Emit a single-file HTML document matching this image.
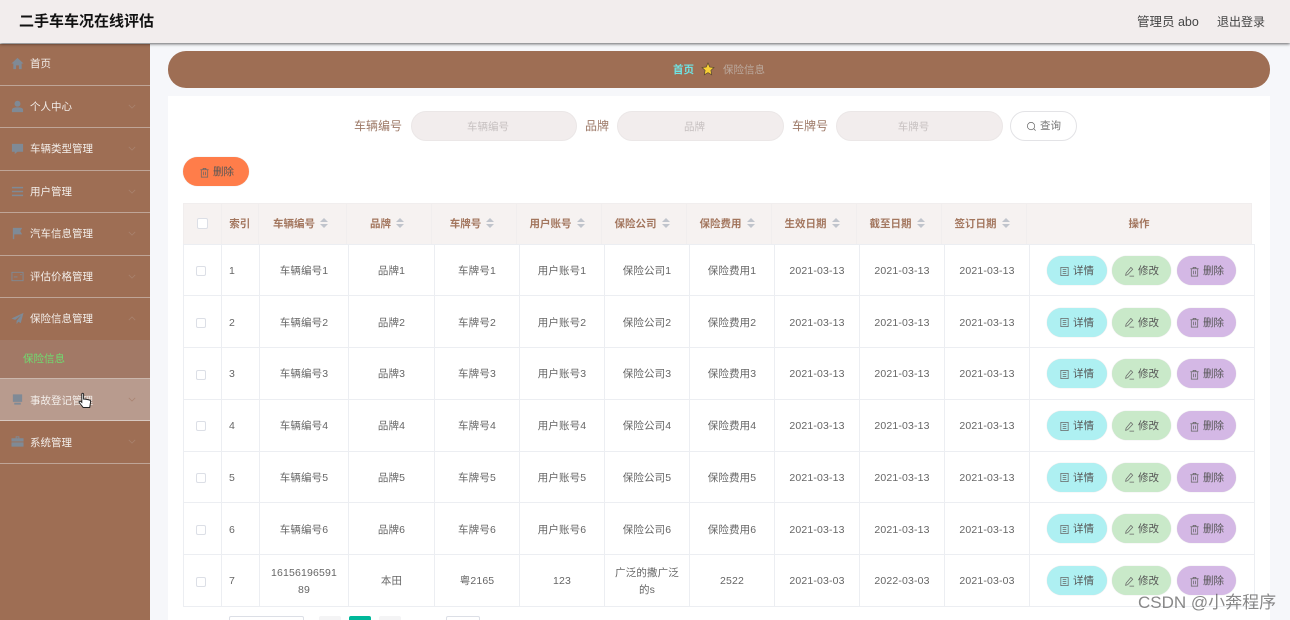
<!DOCTYPE html>
<html lang="zh"><head><meta charset="utf-8"><title>二手车车况在线评估</title>
<style>
*{box-sizing:border-box}
html,body{margin:0;padding:0;width:1290px;height:620px;overflow:hidden;background:#f6f7fa;font-family:"Liberation Sans","Noto Sans CJK SC",sans-serif;color:#666}
#root{position:absolute;left:0;top:0;width:1290px;height:620px;overflow:hidden;filter:blur(.35px)}
.a{position:absolute}
#top{left:0;top:0;width:1290px;height:43px;background:#f2eded;box-shadow:0 1px 3px rgba(0,0,0,.6);z-index:5}
#top b{position:absolute;left:19px;top:11px;font-size:15px;line-height:22px;color:#111}
#top span{position:absolute;top:13px;font-size:12px;line-height:18px;color:#444}
#side{left:0;top:44px;width:150px;height:576px;background:#9e6e54}
.m{position:absolute;left:0;width:150px;height:42.5px;border-bottom:1.5px solid #bfa597;color:#f3eeea;font-size:10.5px;line-height:43.5px;padding-left:30px}
.m svg.i{position:absolute;left:11px;top:14px;width:13px;height:13px;fill:#7f8a96}
.m svg.c{position:absolute;left:128px;top:18px;width:8px;height:5px;fill:none;stroke:#a98370;stroke-width:1}
#sub{position:absolute;left:0;top:296px;width:150px;height:38px;background:#a27966;color:#6fdc6f;font-size:10.5px;line-height:39px;padding-left:23px}
#bc{left:168px;top:51px;width:1102px;height:37px;border-radius:18px;background:#9e6e54;font-size:10.5px;line-height:38px}
#bc span{position:absolute;top:0}
#main{left:168px;top:96px;width:1102px;height:524px;background:#fff}
.l{position:absolute;color:#9e7a68;line-height:20px;font-size:12px}
.ip{position:absolute;top:111px;height:30px;background:#f2eded;border:1px solid #ebe7e7;border-radius:15px;text-align:center;font-size:10.5px;line-height:31px;color:#c6c0c0;padding-right:12px}
.btn{position:absolute;border-radius:15px;font-size:10.5px;line-height:31px;height:29px;color:#555;box-shadow:0 0 1px rgba(0,0,0,.2);text-align:left;white-space:nowrap}
.btn svg{position:absolute;left:12px;top:9.5px;width:11px;height:11px;fill:none;stroke:#666;stroke-width:.8}
.btn span{position:absolute;left:26px;top:0}
table{border-collapse:collapse;table-layout:fixed;position:absolute;font-size:10.5px}
#th{left:183px;top:203px;width:1069px;height:41px;background:#f6f2f1;color:#a3765e;font-weight:bold}
#th td{border:1px solid #f1eeee;text-align:center;padding:0 0 2px 0;height:41px;border-bottom:0}
#th td.so{padding-right:4px}
#tb{left:183px;top:243.5px;width:1072px;color:#666}
#tb td{border:1px solid #eceef2;text-align:center;height:51.75px;padding:3px 8px 0;line-height:17px;letter-spacing:.15px;word-break:break-all}
#tb td.n{text-align:left;padding-left:7px}
.cb{display:inline-block;width:10px;height:10px;border:1px solid #dcdfe6;border-radius:2px;background:#fff;vertical-align:middle}
#tb .cb{margin-left:-3px}
.s{display:inline-block;width:8px;height:10px;margin-left:5px;vertical-align:-1px;position:relative}
.s:before,.s:after{content:"";position:absolute;left:0;border-left:4px solid transparent;border-right:4px solid transparent}
.s:before{top:0;border-bottom:4px solid #c0c4cc}
.s:after{bottom:0;border-top:4px solid #c0c4cc}
.pg{position:absolute;top:616px;height:10px;border-radius:2px 2px 0 0}
</style></head><body>
<div id="root">
<div class="a" id="top"><b>二手车车况在线评估</b><span style="left:1137px;font-size:12.5px">管理员 abo</span><span style="left:1217px">退出登录</span></div>
<div class="a" id="side">
<div class="m" style="top:-1px"><svg class="i" viewBox="0 0 14 14"><path d="M7 1L0.5 7H2.5V13H5.5V9H8.5V13H11.5V7H13.5Z"/></svg>首页</div>
<div class="m" style="top:41.5px"><svg class="i" viewBox="0 0 14 14"><circle cx="7" cy="4" r="3.2"/><path d="M1 13V10.5C1 9 3 8 7 8S13 9 13 10.5V13Z"/></svg>个人中心<svg class="c" viewBox="0 0 10 6"><path d="M1 1L5 5L9 1"/></svg></div>
<div class="m" style="top:84px"><svg class="i" viewBox="0 0 14 14"><path d="M1 2H13V10.5H7L4 13V10.5H1Z"/></svg>车辆类型管理<svg class="c" viewBox="0 0 10 6"><path d="M1 1L5 5L9 1"/></svg></div>
<div class="m" style="top:126.5px"><svg class="i" viewBox="0 0 14 14"><path d="M1 2H13V3.6H1ZM1 6.2H13V7.8H1ZM1 10.4H13V12H1Z"/></svg>用户管理<svg class="c" viewBox="0 0 10 6"><path d="M1 1L5 5L9 1"/></svg></div>
<div class="m" style="top:169px"><svg class="i" viewBox="0 0 14 14"><path d="M2 1H12L10 4.5L12 8H3.5V13H2Z"/></svg>汽车信息管理<svg class="c" viewBox="0 0 10 6"><path d="M1 1L5 5L9 1"/></svg></div>
<div class="m" style="top:211.5px"><svg class="i" viewBox="0 0 14 14" style="fill:none;stroke:#7f8a96"><path d="M1 2.5H13V11.5H1ZM3 7.5H7M10 5H11.5"/></svg>评估价格管理<svg class="c" viewBox="0 0 10 6"><path d="M1 1L5 5L9 1"/></svg></div>
<div class="m" style="top:254px;border-bottom:0"><svg class="i" viewBox="0 0 14 14"><path d="M13.5 1L0.5 7L4.5 8.5L11 3.5L6 9.5V13L8 10.5L10.5 12Z"/></svg>保险信息管理<svg class="c" viewBox="0 0 10 6"><path d="M1 5L5 1L9 5"/></svg></div>
<div id="sub">保险信息</div>
<div class="m" style="top:334px;height:43px;background:#b89b8e;border-top:1.5px solid #cbb7ad;border-bottom-color:#d8c9c1;line-height:44px"><svg class="i" viewBox="0 0 14 14"><path d="M2 1.5H12V9.5H2ZM3.5 10.5H10.5V12.5H3.5Z"/></svg>事故登记管理<svg class="c" viewBox="0 0 10 6"><path d="M1 1L5 5L9 1"/></svg></div>
<div class="m" style="top:377px;line-height:44px"><svg class="i" viewBox="0 0 14 14"><path d="M5 1.5H9V3.5H13.5V7H0.5V3.5H5ZM6 2.5V3.5H8V2.5ZM0.5 8H13.5V12.5H0.5Z"/></svg>系统管理<svg class="c" viewBox="0 0 10 6"><path d="M1 1L5 5L9 1"/></svg></div>
</div>
<svg class="a" style="left:78px;top:392px;z-index:4" width="14" height="18" viewBox="0 0 14 18"><path d="M4 1.5C4.8 1 5.6 1.5 5.6 2.3V7L8 7.3L11.5 8C12.5 8.3 12.8 9 12.6 10L11.7 15.5H5.2L1.2 10.5C.7 9.7 1.6 8.7 2.5 9.3L3.8 10.4V2.3C3.8 2 3.9 1.7 4 1.5Z" fill="#fff" stroke="#222" stroke-width="1"/></svg>
<div class="a" id="bc"><span style="left:505px;color:#6fe3e3;font-weight:bold">首页</span><svg class="a" style="left:533px;top:11px" width="14" height="14" viewBox="0 0 14 14"><path d="M7 1L8.8 5L13 5.5L9.9 8.4L10.7 12.8L7 10.6L3.3 12.8L4.1 8.4L1 5.5L5.2 5Z" fill="#f8cf35" stroke="#5b4a30" stroke-width=".7"/></svg><span style="left:555px;color:#bba99e">保险信息</span></div>
<div class="a" id="main"></div>
<div class="l" style="left:354px;top:116px">车辆编号</div><div class="ip" style="left:411px;width:166px">车辆编号</div>
<div class="l" style="left:585px;top:116px">品牌</div><div class="ip" style="left:617px;width:167px">品牌</div>
<div class="l" style="left:792px;top:116px">车牌号</div><div class="ip" style="left:836px;width:167px">车牌号</div>
<div class="btn" style="left:1010px;top:111px;width:67px;height:30px;background:#fff;border:1px solid #e3e3e6;box-shadow:none;color:#777;line-height:29px"><svg viewBox="0 0 12 12" style="left:15px;top:9px"><circle cx="5.5" cy="5.5" r="4"/><path d="M8.5 8.5L10.5 10.5"/></svg><span style="left:29px">查询</span></div>
<div class="btn" style="left:183px;top:157px;width:66px;background:#ff7d4a"><svg viewBox="0 0 12 12" style="left:16px"><path d="M1.5 3H10.5M4.5 3V1.5H7.5V3M2.5 3V11H9.5V3M5 5V9M7 5V9"/></svg><span style="left:30px">删除</span></div>
<table id="th" class="a"><colgroup><col style="width:37.5px"><col style="width:37.5px"><col style="width:88px"><col style="width:85px"><col style="width:85px"><col style="width:85px"><col style="width:85px"><col style="width:85px"><col style="width:85px"><col style="width:85px"><col style="width:85px"><col></colgroup><tr>
<td><i class="cb" style="width:11px;height:11px"></i></td><td>索引</td><td class="so">车辆编号<i class="s"></i></td><td class="so">品牌<i class="s"></i></td><td class="so">车牌号<i class="s"></i></td><td class="so">用户账号<i class="s"></i></td><td class="so">保险公司<i class="s"></i></td><td class="so">保险费用<i class="s"></i></td><td class="so">生效日期<i class="s"></i></td><td class="so">截至日期<i class="s"></i></td><td class="so">签订日期<i class="s"></i></td><td>操作</td></tr></table>
<table id="tb" class="a"><colgroup><col style="width:38px"><col style="width:38px"><col style="width:89px"><col style="width:86px"><col style="width:85px"><col style="width:85px"><col style="width:85px"><col style="width:85px"><col style="width:85px"><col style="width:85px"><col style="width:85px"><col></colgroup>
<tr><td><i class="cb"></i></td><td class="n">1</td><td>车辆编号1</td><td>品牌1</td><td>车牌号1</td><td>用户账号1</td><td>保险公司1</td><td>保险费用1</td><td>2021-03-13</td><td>2021-03-13</td><td>2021-03-13</td><td></td></tr>
<tr><td><i class="cb"></i></td><td class="n">2</td><td>车辆编号2</td><td>品牌2</td><td>车牌号2</td><td>用户账号2</td><td>保险公司2</td><td>保险费用2</td><td>2021-03-13</td><td>2021-03-13</td><td>2021-03-13</td><td></td></tr>
<tr><td><i class="cb"></i></td><td class="n">3</td><td>车辆编号3</td><td>品牌3</td><td>车牌号3</td><td>用户账号3</td><td>保险公司3</td><td>保险费用3</td><td>2021-03-13</td><td>2021-03-13</td><td>2021-03-13</td><td></td></tr>
<tr><td><i class="cb"></i></td><td class="n">4</td><td>车辆编号4</td><td>品牌4</td><td>车牌号4</td><td>用户账号4</td><td>保险公司4</td><td>保险费用4</td><td>2021-03-13</td><td>2021-03-13</td><td>2021-03-13</td><td></td></tr>
<tr><td><i class="cb"></i></td><td class="n">5</td><td>车辆编号5</td><td>品牌5</td><td>车牌号5</td><td>用户账号5</td><td>保险公司5</td><td>保险费用5</td><td>2021-03-13</td><td>2021-03-13</td><td>2021-03-13</td><td></td></tr>
<tr><td><i class="cb"></i></td><td class="n">6</td><td>车辆编号6</td><td>品牌6</td><td>车牌号6</td><td>用户账号6</td><td>保险公司6</td><td>保险费用6</td><td>2021-03-13</td><td>2021-03-13</td><td>2021-03-13</td><td></td></tr>
<tr><td><i class="cb"></i></td><td class="n">7</td><td style="padding-left:10px;padding-right:10px">1615619659189</td><td>本田</td><td>粤2165</td><td>123</td><td>广泛的撒广泛的s</td><td>2522</td><td>2021-03-03</td><td>2022-03-03</td><td>2021-03-03</td><td></td></tr>
</table>
<svg width="0" height="0" style="position:absolute"><defs>
<symbol id="d" viewBox="0 0 12 12"><path d="M2 1.5H10V10.5H2ZM4 4H8M4 6H8M4 8H8"/></symbol>
<symbol id="e" viewBox="0 0 12 12"><path d="M7.5 1.5L9.5 3.5L4 9.5L1.8 10.2L2.3 7.8ZM6 11H11"/></symbol>
<symbol id="t" viewBox="0 0 12 12"><path d="M1.5 3H10.5M4.5 3V1.5H7.5V3M2.5 3V11H9.5V3M5 5V9M7 5V9"/></symbol>
</defs></svg>
<div class="btn" style="left:1047px;top:256px;width:60px;background:#aef0f2"><svg><use href="#d"/></svg><span>详情</span></div><div class="btn" style="left:1112px;top:256px;width:59px;background:#c9e9c9"><svg><use href="#e"/></svg><span>修改</span></div><div class="btn" style="left:1177px;top:256px;width:59px;background:#d4b8e5"><svg><use href="#t"/></svg><span>删除</span></div>
<div class="btn" style="left:1047px;top:307.5px;width:60px;background:#aef0f2"><svg><use href="#d"/></svg><span>详情</span></div><div class="btn" style="left:1112px;top:307.5px;width:59px;background:#c9e9c9"><svg><use href="#e"/></svg><span>修改</span></div><div class="btn" style="left:1177px;top:307.5px;width:59px;background:#d4b8e5"><svg><use href="#t"/></svg><span>删除</span></div>
<div class="btn" style="left:1047px;top:359px;width:60px;background:#aef0f2"><svg><use href="#d"/></svg><span>详情</span></div><div class="btn" style="left:1112px;top:359px;width:59px;background:#c9e9c9"><svg><use href="#e"/></svg><span>修改</span></div><div class="btn" style="left:1177px;top:359px;width:59px;background:#d4b8e5"><svg><use href="#t"/></svg><span>删除</span></div>
<div class="btn" style="left:1047px;top:411px;width:60px;background:#aef0f2"><svg><use href="#d"/></svg><span>详情</span></div><div class="btn" style="left:1112px;top:411px;width:59px;background:#c9e9c9"><svg><use href="#e"/></svg><span>修改</span></div><div class="btn" style="left:1177px;top:411px;width:59px;background:#d4b8e5"><svg><use href="#t"/></svg><span>删除</span></div>
<div class="btn" style="left:1047px;top:462.5px;width:60px;background:#aef0f2"><svg><use href="#d"/></svg><span>详情</span></div><div class="btn" style="left:1112px;top:462.5px;width:59px;background:#c9e9c9"><svg><use href="#e"/></svg><span>修改</span></div><div class="btn" style="left:1177px;top:462.5px;width:59px;background:#d4b8e5"><svg><use href="#t"/></svg><span>删除</span></div>
<div class="btn" style="left:1047px;top:514px;width:60px;background:#aef0f2"><svg><use href="#d"/></svg><span>详情</span></div><div class="btn" style="left:1112px;top:514px;width:59px;background:#c9e9c9"><svg><use href="#e"/></svg><span>修改</span></div><div class="btn" style="left:1177px;top:514px;width:59px;background:#d4b8e5"><svg><use href="#t"/></svg><span>删除</span></div>
<div class="btn" style="left:1047px;top:566px;width:60px;background:#aef0f2"><svg><use href="#d"/></svg><span>详情</span></div><div class="btn" style="left:1112px;top:566px;width:59px;background:#c9e9c9"><svg><use href="#e"/></svg><span>修改</span></div><div class="btn" style="left:1177px;top:566px;width:59px;background:#d4b8e5"><svg><use href="#t"/></svg><span>删除</span></div>
<div class="pg" style="left:229px;width:75px;border:1px solid #dcdfe6;background:#fff"></div>
<div class="pg" style="left:319px;width:22px;background:#f4f4f5"></div>
<div class="pg" style="left:349px;width:22px;background:#00b89a"></div>
<div class="pg" style="left:379px;width:22px;background:#f4f4f5"></div>
<div class="pg" style="left:446px;width:34px;border:1px solid #dcdfe6;background:#fff"></div>
<div class="a" style="left:1138px;top:591px;font-size:17px;line-height:23px;color:rgba(90,90,90,.72);white-space:nowrap;z-index:6">CSDN @小奔程序</div>
</div>
</body></html>
